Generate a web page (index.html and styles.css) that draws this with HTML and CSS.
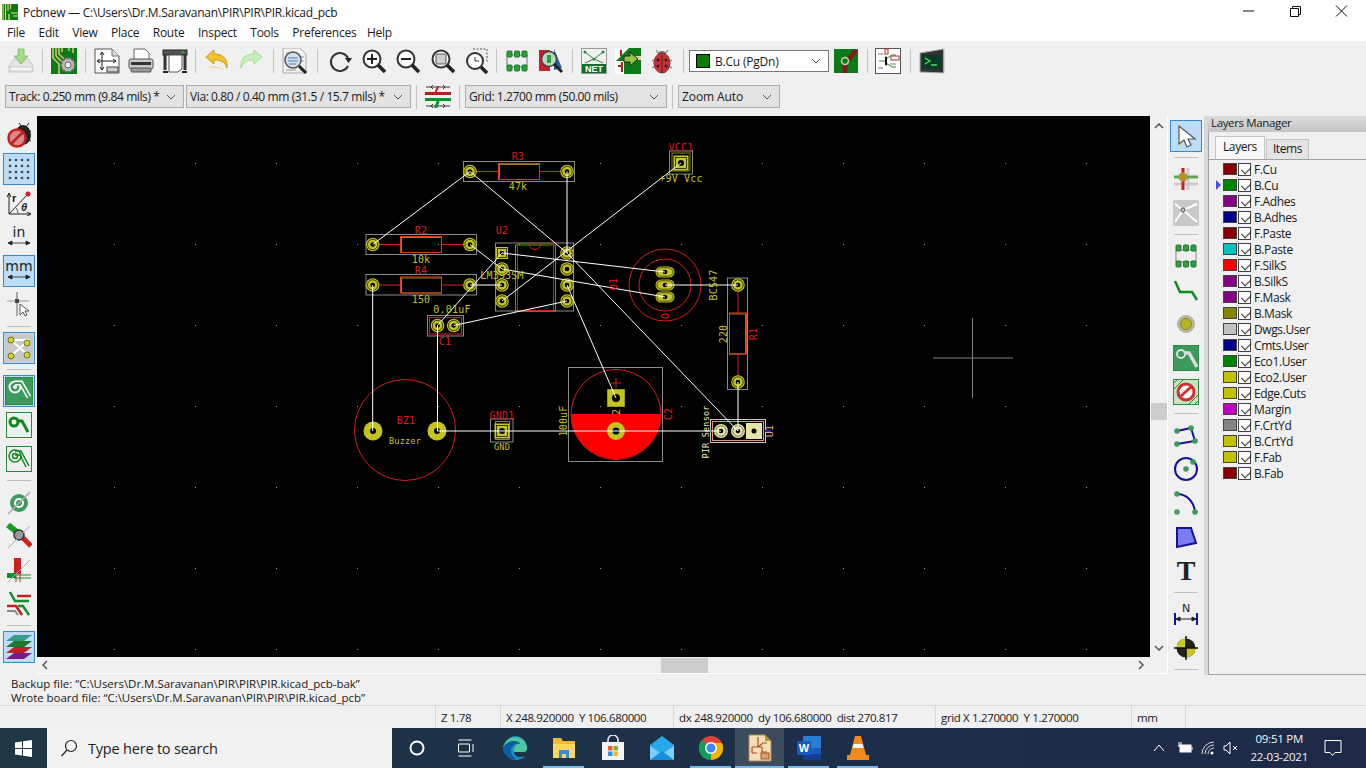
FILE: index.html
```html
<!DOCTYPE html>
<html lang="en">
<head>
<meta charset="utf-8">
<title>Pcbnew</title>
<link rel="stylesheet" href="styles.css">
</head>
<body>
<div class="app">
  <header class="titlebar">
    <svg class="appicon" width="16" height="16" viewBox="0 0 16 16"><rect width="16" height="16" fill="#0a7a0a"/><path d="M1 0v16M3.500 0v16M6 0v7M8.500 0v5" stroke="#d8c878" stroke-width="1.200"/><path d="M9 9h7M11 12h5M7 16v-6" stroke="#e8e0a0" stroke-width="1.200"/></svg>
    <span class="title">Pcbnew — C:\Users\Dr.M.Saravanan\PIR\PIR\PIR.kicad_pcb</span>
    <div class="winctl">
      <svg width="46" height="24" viewBox="0 0 46 24"><path d="M17 11h11" stroke="#111"/></svg>
      <svg width="46" height="24" viewBox="0 0 46 24"><path d="M18.500 8.500h8v8h-8zM20.500 8.500v-2h8v8h-2" fill="none" stroke="#111"/></svg>
      <svg width="46" height="24" viewBox="0 0 46 24"><path d="M18 5.500l11 11M29 5.500l-11 11" stroke="#111"/></svg>
    </div>
  </header>
  <nav class="menubar">
    <span>File</span><span>Edit</span><span>View</span><span>Place</span><span>Route</span><span>Inspect</span><span>Tools</span><span class="m8">Preferences</span><span>Help</span>
  </nav>

  <div class="toolbar tb1">
    <span class="tool"><svg width="26" height="26" viewBox="0 0 26 26"><path d="M1 18l5-7h14l5 7v6H1z" fill="#e4e4e4" stroke="#c8c8c8"/><rect x="2" y="19" width="22" height="4" fill="#f4f4f4" stroke="#d0d0d0"/><path d="M10 1h6v7h4l-7 8-7-8h4z" fill="#a8d98a" stroke="#8cc070"/></svg></span>
    <i class="sep"></i>
    <span class="tool"><svg width="26" height="26" viewBox="0 0 26 26"><rect width="26" height="26" fill="#0b7a17"/><path d="M2 0v10l6 6v10M5 0v8l6 6M8 0v6l6 6M11 0v4M18 0v3M22 0v5" stroke="#d8c97a" stroke-width="1.500" fill="none"/><circle cx="17" cy="17" r="7" fill="#b8b8b8" stroke="#666" stroke-dasharray="3 1.500" stroke-width="2"/><circle cx="17" cy="17" r="3" fill="#eee" stroke="#666"/></svg></span>
    <i class="sep"></i>
    <span class="tool"><svg width="26" height="26" viewBox="0 0 26 26"><path d="M1 1h17l7 7v17H1z" fill="#fff" stroke="#555"/><path d="M18 1v7h7" fill="#ddd" stroke="#777"/><path d="M8 4v18M3 13h19M8 4l-2 3M8 4l2 3M8 22l-2-3M8 22l2-3M3 13l3-2M3 13l3 2M22 13l-3-2M22 13l-3 2" stroke="#222" fill="none"/><rect x="13" y="19" width="11" height="5" fill="#ccc" stroke="#444"/></svg></span>
    <span class="tool"><svg width="26" height="26" viewBox="0 0 26 26"><path d="M6 1h11l4 4v8H6z" fill="#fff" stroke="#666"/><rect x="1" y="11" width="24" height="10" rx="2" fill="#c9c9c9" stroke="#555"/><rect x="3" y="14" width="20" height="3" fill="#333"/><rect x="3" y="20" width="20" height="4" rx="1" fill="#999" stroke="#555"/></svg></span>
    <span class="tool"><svg width="26" height="26" viewBox="0 0 26 26"><rect x="1" y="2" width="24" height="5" fill="#555" stroke="#222"/><circle cx="21" cy="4" r="1.300" fill="#2ea82e"/><path d="M7 7h13v14l-4 3H7z" fill="#fff" stroke="#555"/><path d="M3 7v15M23 7v15" stroke="#333" stroke-width="3"/><path d="M1 24h5M20 24h5" stroke="#222" stroke-width="2"/></svg></span>
    <i class="sep s7"></i>
    <span class="tool w35"><svg width="26" height="26" viewBox="0 0 26 26"><path d="M2 9l8-7v4c8 0 14 4 13 14-2-6-6-8-13-8v4z" fill="#f4c430" stroke="#c89a10"/><path d="M6 19c4 0 10 0 14 3" stroke="#eed27a" fill="none"/></svg></span>
    <span class="tool"><svg width="26" height="26" viewBox="0 0 26 26"><path d="M24 9l-8-7v4C8 6 2 10 3 20c2-6 6-8 13-8v4z" fill="#c8eeb8" stroke="#a8d898"/></svg></span>
    <i class="sep s10"></i>
    <span class="tool"><svg width="26" height="26" viewBox="0 0 26 26"><path d="M1 0h17l6 6v19H1z" fill="#f2f2f2" stroke="#aaa"/><path d="M4 5h10M4 22h10M18 22h4M19 9h3M19 13h3" stroke="#999"/><circle cx="11" cy="12" r="8" fill="#d4e0ee" stroke="#555" stroke-width="1.500"/><path d="M6 10h10M6 13h10M7 16h7" stroke="#5a7ea8"/><path d="M17 18l7 7" stroke="#222" stroke-width="3"/></svg></span>
    <i class="sep s10"></i>
    <span class="tool w35"><svg width="26" height="26" viewBox="0 0 26 26"><path d="M21 10a9 9 0 1 0 0 8" fill="none" stroke="#333" stroke-width="2"/><path d="M18 10h7l-3.500 5z" fill="#222"/></svg></span>
    <span class="tool"><svg width="26" height="26" viewBox="0 0 26 26"><circle cx="11" cy="11" r="8.500" fill="#fff" stroke="#333" stroke-width="2"/><path d="M6 11h10M11 6v10" stroke="#222" stroke-width="2"/><path d="M17 17l7 7" stroke="#222" stroke-width="3.500"/></svg></span>
    <span class="tool"><svg width="26" height="26" viewBox="0 0 26 26"><circle cx="11" cy="11" r="8.500" fill="#fff" stroke="#333" stroke-width="2"/><path d="M6 11h10" stroke="#222" stroke-width="2"/><path d="M17 17l7 7" stroke="#222" stroke-width="3.500"/></svg></span>
    <span class="tool w35"><svg width="26" height="26" viewBox="0 0 26 26"><circle cx="11" cy="11" r="8.500" fill="#fff" stroke="#333" stroke-width="2"/><rect x="6" y="6" width="10" height="10" rx="1.500" fill="#ccc" stroke="#555"/><path d="M17 17l7 7" stroke="#222" stroke-width="3.500"/></svg></span>
    <span class="tool"><svg width="26" height="26" viewBox="0 0 26 26"><circle cx="11" cy="13" r="8" fill="#fff" stroke="#333" stroke-width="2"/><path d="M9 1h14v14" fill="none" stroke="#555" stroke-dasharray="2 1.500"/><path d="M11 9v4h4" stroke="#333" fill="none"/><path d="M17 19l6 6" stroke="#222" stroke-width="3.500"/></svg></span>
    <i class="sep s5"></i>
    <span class="tool w35"><svg width="26" height="26" viewBox="0 0 26 26"><path d="M3 7h20v12H3z" fill="#eee" stroke="#777"/><g fill="#2e9e3e" stroke="#1a7a2a"><rect x="3" y="3" width="5" height="6" rx="1"/><rect x="10.500" y="3" width="5" height="6" rx="1"/><rect x="18" y="3" width="5" height="6" rx="1"/><rect x="3" y="17" width="5" height="6" rx="1"/><rect x="10.500" y="17" width="5" height="6" rx="1"/><rect x="18" y="17" width="5" height="6" rx="1"/></g></svg></span>
    <span class="tool"><svg width="26" height="26" viewBox="0 0 26 26"><rect x="1" y="2" width="11" height="21" fill="#c8202a"/><path d="M16 1l8 19-8 2z" fill="#2a5ca8"/><circle cx="11" cy="11" r="7.500" fill="#b8d8c0" stroke="#444" stroke-width="1.500"/><rect x="9" y="7" width="4" height="8" fill="#2e9e3e"/><path d="M16 16l8 8" stroke="#222" stroke-width="3"/></svg></span>
    <i class="sep"></i>
    <span class="tool"><svg width="26" height="26" viewBox="0 0 26 26"><rect x=".5" y=".5" width="25" height="25" fill="#f0f0f0" stroke="#999"/><path d="M4 4l9 7 9-7M4 15l9-4 9 4" stroke="#2e8a3e" fill="none"/><circle cx="4" cy="4" r="1.500" fill="#2e8a3e"/><circle cx="22" cy="4" r="1.500" fill="#2e8a3e"/><circle cx="13" cy="11" r="1.500" fill="#2e8a3e"/><rect x="1" y="16" width="24" height="9" fill="#0f6f2a"/><text class="neticon" x="13" y="24">NET</text></svg></span>
    <span class="tool"><svg width="26" height="26" viewBox="0 0 26 26"><rect width="26" height="26" fill="#0b7a17"/><path d="M0 0h14L0 14z" fill="#fff"/><path d="M0 26V13h9v13z" fill="#fff"/><path d="M6 2v6M3 18h4M7 14v10" stroke="#b02020" stroke-width="2"/><path d="M16 8h10v4H16z" fill="#e0d8a0"/><path d="M9 8h6V4l8 7-8 7v-4H9z" fill="#8ec63f" stroke="#222"/></svg></span>
    <span class="tool"><svg width="26" height="26" viewBox="0 0 26 26"><path d="M7 2l3 4M19 2l-3 4M3 12l4 2M23 12l-4 2M3 20l4-2M23 20l-4-2" stroke="#666"/><ellipse cx="13" cy="6" rx="4" ry="3" fill="#777"/><ellipse cx="13" cy="15" rx="8" ry="10" fill="#c8323a" stroke="#8a2a2a"/><path d="M13 7v18" stroke="#5a1a1a"/><circle cx="9" cy="12" r="1.500" fill="#411"/><circle cx="17" cy="12" r="1.500" fill="#411"/><circle cx="9" cy="18" r="1.500" fill="#411"/><circle cx="17" cy="18" r="1.500" fill="#411"/></svg></span>
    <i class="sep"></i>
    <div class="select layersel"><i class="lsw"></i><span>B.Cu (PgDn)</span><svg class="caret" width="10" height="6" viewBox="0 0 10 6"><path d="M1 1l4 4 4-4" fill="none" stroke="#555"/></svg></div>
    <span class="tool"><svg width="24" height="24" viewBox="0 0 24 24"><rect width="24" height="24" fill="#0b7a17"/><path d="M11 24v-9L22 1" fill="none" stroke="#7a1f1f" stroke-width="5"/><circle cx="11" cy="12" r="3.500" fill="#0b7a17" stroke="#d0d0a8" stroke-width="1.500"/></svg></span>
    <i class="sep s8"></i>
    <span class="tool"><svg width="26" height="26" viewBox="0 0 26 26"><rect x=".5" y=".5" width="25" height="25" fill="#fff" stroke="#555"/><path d="M11 8v10M11 13H4M11 11l6-4h4M11 15l6 4h4" stroke="#2a8a2a" fill="none"/><path d="M11 9v8" stroke="#111" stroke-width="2"/><rect x="16" y="8" width="8" height="4" fill="#fff" stroke="#b03030"/><rect x="10" y="1" width="3" height="5" fill="#fff" stroke="#b03030"/><path d="M3 6h5M3 20h5M15 16h6" stroke="#777"/></svg></span>
    <i class="sep s10"></i>
    <span class="tool"><svg width="26" height="26" viewBox="0 0 26 26"><path d="M1 5l24-4v24l-24-1z" fill="#333" stroke="#aaa"/><path d="M25 1v24" stroke="#ddd"/><rect x="3" y="7" width="19" height="14" fill="#0d3a28"/><path d="M6 10l5 3-5 3M12 17h6" stroke="#4ce04c" stroke-width="1.300" fill="none"/></svg></span>
  </div>

  <div class="toolbar tb2">
    <div class="select seltrack"><span>Track: 0.250 mm (9.84 mils) *</span><svg class="caret" width="10" height="6" viewBox="0 0 10 6"><path d="M1 1l4 4 4-4" fill="none" stroke="#555"/></svg></div>
    <div class="select selvia"><span>Via: 0.80 / 0.40 mm (31.5 / 15.7 mils) *</span><svg class="caret" width="10" height="6" viewBox="0 0 10 6"><path d="M1 1l4 4 4-4" fill="none" stroke="#555"/></svg></div>
    <i class="sep2"></i>
    <span class="tool2"><svg width="28" height="26" viewBox="0 0 28 26"><path d="M2 3h24M2 22h24" stroke="#333"/><path d="M9 1l-2 2 2 2M19 1l2 2-2 2M9 20l-2 2 2 2M19 20l2 2-2 2" stroke="#333" fill="none"/><path d="M14 2c0 3-2 3-2 6" stroke="#c02020" stroke-width="2" fill="none"/><rect x="1" y="8" width="26" height="3" fill="#b82020"/><rect x="1" y="14" width="26" height="3" fill="#12902a"/><path d="M14 17c0 3-2 3-2 7" stroke="#12902a" stroke-width="3" fill="none"/></svg></span>
    <i class="sep2"></i>
    <div class="select selgrid"><span>Grid: 1.2700 mm (50.00 mils)</span><svg class="caret" width="10" height="6" viewBox="0 0 10 6"><path d="M1 1l4 4 4-4" fill="none" stroke="#555"/></svg></div>
    <i class="sep2"></i>
    <div class="select selzoom"><span>Zoom Auto</span><svg class="caret" width="10" height="6" viewBox="0 0 10 6"><path d="M1 1l4 4 4-4" fill="none" stroke="#555"/></svg></div>
  </div>

  <main class="main">
    <aside class="vtools">
      <span class="vt"><svg width="28" height="28" viewBox="0 0 28 28"><ellipse cx="18" cy="14" rx="8" ry="10" fill="#222"/><path d="M14 2l3 4M24 2l-3 4M26 10l-4 2M26 20l-4-2" stroke="#222"/><circle cx="12" cy="17" r="8.500" fill="#d98a86" stroke="#c82020" stroke-width="2.500"/><path d="M6 23L18 11" stroke="#c82020" stroke-width="2.500"/></svg></span>
      <span class="vt on"><svg width="24" height="24" viewBox="0 0 24 24" fill="#444"><circle cx="3" cy="3" r="1.300"/><circle cx="9" cy="3" r="1.300"/><circle cx="15" cy="3" r="1.300"/><circle cx="21" cy="3" r="1.300"/><circle cx="3" cy="9" r="1.300"/><circle cx="9" cy="9" r="1.300"/><circle cx="15" cy="9" r="1.300"/><circle cx="21" cy="9" r="1.300"/><circle cx="3" cy="15" r="1.300"/><circle cx="9" cy="15" r="1.300"/><circle cx="15" cy="15" r="1.300"/><circle cx="21" cy="15" r="1.300"/><circle cx="3" cy="21" r="1.300"/><circle cx="9" cy="21" r="1.300"/><circle cx="15" cy="21" r="1.300"/><circle cx="21" cy="21" r="1.300"/></svg></span>
      <span class="vt"><svg width="26" height="26" viewBox="0 0 26 26"><path d="M3 24V3M3 24h22M3 3L1 7M3 3l2 4M25 24l-4-2M25 24l-4 2M3 24L21 5" stroke="#222" fill="none"/><circle cx="22" cy="4" r="2.500" fill="#d82020"/><path d="M12 24c0-3-1-5-2-6" fill="none" stroke="#555"/><text class="rt" x="6" y="12">r</text><text class="rt th" x="15" y="21">θ</text></svg></span>
      <span class="vt"><svg width="26" height="26" viewBox="0 0 26 26"><text class="unit" x="13" y="13">in</text><path d="M2 19h22M2 19l4-2v4zM24 19l-4-2v4z" fill="#222" stroke="#222" stroke-width=".8"/></svg></span>
      <span class="vt on"><svg width="26" height="26" viewBox="0 0 26 26"><text class="unit" x="13" y="13">mm</text><path d="M2 19h22M2 19l4-2v4zM24 19l-4-2v4z" fill="#222" stroke="#222" stroke-width=".8"/></svg></span>
      <span class="vt"><svg width="26" height="26" viewBox="0 0 26 26"><path d="M1 9h22" stroke="#999"/><path d="M11 0v24" stroke="#aaa" stroke-width="2"/><path d="M9 7h4v4H9z" fill="#444"/><path d="M14 12v11l3-3 2 4 2-1-2-4h4z" fill="#fff" stroke="#555"/></svg></span>
      <i class="hsep"></i>
      <span class="vt on"><svg width="28" height="28" viewBox="0 0 28 28"><rect width="28" height="28" fill="#c8c8c8"/><path d="M6 6l18 16M6 22l18-16M6 6h18" stroke="#fff" stroke-width="2"/><g fill="#d4d42a" stroke="#6a7a20"><circle cx="6" cy="6" r="3"/><circle cx="22" cy="9" r="3"/><circle cx="6" cy="22" r="3"/><circle cx="22" cy="21" r="3"/></g></svg></span>
      <i class="hsep"></i>
      <span class="vt on"><svg width="28" height="28" viewBox="0 0 28 28"><rect width="28" height="28" fill="#3b9a5a" stroke="#1a7a3a"/><circle cx="10" cy="10" r="5.500" fill="none" stroke="#fff" stroke-width="2"/><path d="M10 6h6l8 14" fill="none" stroke="#fff" stroke-width="5"/><path d="M10 6h6l8 14" fill="none" stroke="#3b9a5a" stroke-width="2"/><circle cx="10" cy="10" r="2" fill="#fff"/></svg></span>
      <span class="vt"><svg width="26" height="26" viewBox="0 0 26 26"><rect x=".5" y=".5" width="25" height="25" fill="none" stroke="#2a8a3a"/><circle cx="8" cy="10" r="4" fill="none" stroke="#0e8a1e" stroke-width="3"/><path d="M11 9h5l6 11" fill="none" stroke="#0e8a1e" stroke-width="3"/></svg></span>
      <span class="vt"><svg width="26" height="26" viewBox="0 0 26 26"><rect x=".5" y=".5" width="25" height="25" fill="none" stroke="#2a8a3a"/><circle cx="9" cy="10" r="6" fill="none" stroke="#0e8a1e" stroke-width="1.500"/><circle cx="9" cy="10" r="2.500" fill="none" stroke="#0e8a1e" stroke-width="1.500"/><path d="M9 5h6l8 15M9 9h5l6 12" fill="none" stroke="#0e8a1e" stroke-width="1.500"/></svg></span>
      <i class="hsep"></i>
      <span class="vt"><svg width="26" height="26" viewBox="0 0 26 26"><circle cx="13" cy="14" r="9" fill="#3c9a5a"/><circle cx="13" cy="14" r="5" fill="#fff"/><circle cx="13" cy="14" r="3" fill="#3c9a5a"/><path d="M2 25L24 3" stroke="#aaa" stroke-width="1.500"/></svg></span>
      <span class="vt"><svg width="26" height="26" viewBox="0 0 26 26"><path d="M2 2l10 8" stroke="#10a020" stroke-width="6"/><path d="M14 12l11 11" stroke="#d02020" stroke-width="5"/><circle cx="13" cy="12" r="5" fill="#999" stroke="#333" stroke-width="1.500"/><path d="M2 25L24 3" stroke="#aaa"/></svg></span>
      <span class="vt"><svg width="26" height="26" viewBox="0 0 26 26"><rect x="8" y="1" width="7" height="16" fill="#c82020"/><path d="M1 16h9v5H1z" fill="#10902a"/><path d="M10 17v8M14 17v8" stroke="#c82020"/><path d="M8 18h17M8 21h17" stroke="#10902a"/><path d="M2 25L24 3" stroke="#aaa"/></svg></span>
      <span class="vt"><svg width="26" height="26" viewBox="0 0 26 26"><path d="M4 1l5 9h14" fill="none" stroke="#10902a" stroke-width="2.500"/><path d="M11 5h14" stroke="#c82020" stroke-width="2.500"/><path d="M1 15h9l6 9" fill="none" stroke="#c82020" stroke-width="2.500"/><path d="M12 15h5l6 9" fill="none" stroke="#10902a" stroke-width="2.500"/><path d="M1 20h8l3 4" fill="none" stroke="#888" stroke-width="2"/></svg></span>
      <i class="hsep"></i>
      <span class="vt on"><svg width="28" height="28" viewBox="0 0 28 28"><path d="M1 8l8-6h18l-8 6z" fill="#3c9a8a"/><path d="M1 14l8-6h18l-8 6z" fill="#1a7a2a"/><path d="M1 20l8-6h18l-8 6z" fill="#c02020"/><path d="M1 26l8-6h18l-8 6z" fill="#7a1a8a"/></svg></span>
    </aside>

    <div class="center">
      <div class="canvasrow">
        <svg class="board" width="1113" height="541" viewBox="37 116 1113 541">
          <defs>
            <pattern id="griddots" x="33" y="1" width="81" height="81" patternUnits="userSpaceOnUse"><rect width="1" height="1" fill="#9a9a9a"/></pattern>
            <g id="pad"><circle r="6.800" fill="#c4c41e"/><circle r="5.200" fill="none" stroke="#000" stroke-width=".7"/><circle r="2.300" fill="#000"/></g>
            <g id="sq12"><rect x="-6" y="-6" width="12" height="12" fill="#c4c41e"/><rect x="-4.500" y="-4.500" width="9" height="9" fill="none" stroke="#000" stroke-width=".7"/><circle r="2.300" fill="#000"/></g>
            <g id="sqpad"><rect x="-7.500" y="-7.500" width="15" height="15" fill="#c4c41e"/><rect x="-5.500" y="-5.500" width="11" height="11" fill="none" stroke="#000" stroke-width=".7"/><circle r="3" fill="#000"/></g>
            <g id="ovpad"><rect x="-9.500" y="-5.500" width="19" height="11" rx="5.500" fill="#c4c41e"/><rect x="-8" y="-4.200" width="16" height="8.400" rx="4.200" fill="none" stroke="#000" stroke-width=".6"/><circle r="2.300" fill="#000"/></g>
          </defs>
          <rect x="37" y="116" width="1113" height="541" fill="#000"/>
          <rect x="37" y="116" width="1113" height="541" fill="url(#griddots)"/>
          <path d="M933 358h80M972.500 318v80" stroke="#7c7c7c" fill="none"/>

          <!-- courtyards -->
          <g fill="none" stroke="#8a8a8a">
            <rect x="463.500" y="161.500" width="111" height="20"/>
            <rect x="366" y="234.500" width="110.500" height="20"/>
            <rect x="366" y="274.500" width="110.500" height="20.500"/>
            <rect x="495.500" y="243" width="78" height="68"/>
            <rect x="427.500" y="315.500" width="36" height="20.500"/>
            <rect x="490.500" y="419" width="22.500" height="23"/>
            <rect x="669.500" y="151" width="23" height="23"/>
            <rect x="727.500" y="278" width="20" height="111.500"/>
            <rect x="568.500" y="367.500" width="94" height="94"/>
          </g>

          <!-- fab outlines -->
          <g fill="none" stroke="#a8a828" stroke-width=".8">
            <rect x="495.500" y="421.500" width="14" height="18"/>
            <rect x="672" y="153" width="18" height="18"/>
            <rect x="515.500" y="245" width="40" height="66"/>
            <rect x="499.500" y="164.500" width="40" height="15"/>
            <rect x="401.500" y="237.500" width="40" height="15"/>
            <rect x="401.500" y="278" width="40" height="15"/>
            <rect x="729.500" y="314" width="16" height="40"/>
          </g>

          <!-- silkscreen -->
          <g fill="none" stroke="#d81e1e">
            <path d="M476 171.500h22M539 171.500h22M379 244.500h22M441.500 244.500h22M379 285h22M441.500 285h22M738 291v22M738 354v22"/>
            <path d="M517.500 243.500h36v67h-36zM529 243.500a6 6 0 0 0 12 0"/>
            <rect x="429.500" y="317.500" width="32" height="16.500"/>
            <circle cx="405" cy="430" r="50.500"/>
            <circle cx="665" cy="285" r="36"/>
            <circle cx="665" cy="285" r="26"/>
            <circle cx="616" cy="414.500" r="45"/>
            <path d="M616 378v10M611 383h10"/>
          </g>
          <g fill="none" stroke="#e83a14">
            <rect x="498.500" y="163.500" width="41" height="16"/>
            <rect x="400.500" y="236.500" width="41" height="16"/>
            <rect x="400.500" y="277" width="41" height="16"/>
            <rect x="729.500" y="313" width="17" height="41"/>
          </g>
          <path d="M571 414h90a45 45 0 0 1-90 0z" fill="#ff0000"/>
          <rect x="710.500" y="419.500" width="55" height="23" fill="none" stroke="#c8c8c8"/>
          <rect x="712.500" y="421.500" width="51" height="19" fill="none" stroke="#e89078"/>

          <!-- pads -->
          <use href="#pad" x="470" y="171.500"/><use href="#pad" x="567" y="171.500"/>
          <use href="#pad" x="372.700" y="244.500"/><use href="#pad" x="470" y="244.500"/>
          <use href="#pad" x="372.700" y="285"/><use href="#pad" x="470" y="285"/>
          <use href="#sq12" x="502" y="253"/><use href="#pad" x="502" y="269"/><use href="#pad" x="502" y="285"/><use href="#pad" x="502" y="301"/>
          <use href="#pad" x="567" y="253"/><use href="#pad" x="567" y="269"/><use href="#pad" x="567" y="285"/><use href="#pad" x="567" y="301"/>
          <use href="#pad" x="437.500" y="325.500"/><use href="#pad" x="453.700" y="325.500"/>
          <use href="#ovpad" x="665" y="272"/><use href="#ovpad" x="665" y="285"/><use href="#ovpad" x="665" y="297"/>
          <use href="#pad" x="738" y="285"/><use href="#pad" x="738" y="382"/>
          <use href="#sqpad" x="502" y="431"/><use href="#sqpad" x="681" y="163"/>
          <g fill="#c4c41e"><circle cx="373" cy="431" r="9.500"/><circle cx="437" cy="431" r="9.500"/></g>
          <g fill="#000"><circle cx="373" cy="431" r="3"/><circle cx="437" cy="431" r="3"/></g>
          <rect x="607" y="389" width="18" height="18" fill="#c4c41e" stroke="#000" stroke-width=".4"/><circle cx="616" cy="398" r="4" fill="#000"/>
          <circle cx="616" cy="431" r="9" fill="#c4c41e"/><circle cx="616" cy="431" r="3.500" fill="#000"/>
          <g fill="#e8e4a8"><circle cx="721" cy="431" r="7"/><circle cx="738" cy="431" r="7"/><rect x="746" y="423" width="16" height="16"/></g>
          <circle cx="721" cy="431" r="5.200" fill="none" stroke="#333" stroke-width=".6"/><circle cx="738" cy="431" r="5.200" fill="none" stroke="#333" stroke-width=".6"/>
          <g fill="#000"><circle cx="721" cy="431" r="2.300"/><circle cx="738" cy="431" r="2.300"/><circle cx="754" cy="431" r="2.500"/></g>
          <path d="M705 431h6M765 431h6" stroke="#2030b0" stroke-width="2"/>

          <!-- ratsnest -->
          <g stroke="#fff" fill="none">
            <path d="M470 171.500L372.700 244.500M470 171.500L567 253M567 171.500V253M372.700 285V431M437.500 325.500V431M437.500 431H721M470 244.500L502 269M470 285H502M502 253L437.500 325.500M453.700 325.500L567 301M502 301L681 163M502 253L665 272M502 269L665 297M567 253L738 431M567 285L616 398M665 285H738M738 382V431"/>
          </g>

          <!-- text -->
          <g class="pcbtxt gold">
            <text x="518" y="190">47k</text>
            <text x="421" y="263">10k</text>
            <text x="421" y="303">150</text>
            <text x="502" y="279">LM393SM</text>
            <text x="452" y="313">0.01uF</text>
            <text class="small" x="405" y="444">Buzzer</text>
            <text class="small" x="502" y="450">GND</text>
            <text x="681" y="182">+9V Vcc</text>
            <text transform="translate(717 285) rotate(-90)">BC547</text>
            <text transform="translate(727 334) rotate(-90)">220</text>
            <text transform="translate(567 421) rotate(-90)">100uF</text>
            <text transform="translate(620 412) rotate(-90)">2</text>
          </g>
          <g class="pcbtxt red">
            <text x="518" y="160">R3</text>
            <text x="421" y="234">R2</text>
            <text x="421" y="274">R4</text>
            <text x="502" y="234">U2</text>
            <text x="445" y="345">C1</text>
            <text x="406" y="424">BZ1</text>
            <text x="502" y="419">GND1</text>
            <text x="681" y="151">VCC1</text>
            <text transform="translate(617 284) rotate(-90)">Q1</text>
            <text transform="translate(757 334) rotate(-90)">R1</text>
            <text transform="translate(672 414) rotate(-90)">C2</text>
            <text transform="translate(669 316) rotate(-90)">O</text>
          </g>
          <text class="pcbtxt pink" transform="translate(773 431) rotate(-90)">U1</text>
          <text class="pcbtxt pale small" transform="translate(709 432) rotate(-90)">PIR Sensor</text>
        </svg>
        <div class="vscroll">
          <svg width="10" height="6" viewBox="0 0 10 6"><path d="M1 5l4-4 4 4" fill="none" stroke="#555" stroke-width="1.500"/></svg>
          <i class="vspace1"></i><i class="vthumb"></i><i class="vspace2"></i>
          <svg width="10" height="6" viewBox="0 0 10 6"><path d="M1 1l4 4 4-4" fill="none" stroke="#555" stroke-width="1.500"/></svg>
        </div>
      </div>
      <div class="hscroll">
        <svg width="6" height="10" viewBox="0 0 6 10"><path d="M5 1L1 5l4 4" fill="none" stroke="#555" stroke-width="1.500"/></svg>
        <i class="hspace1"></i><i class="hthumb"></i><i class="hspace2"></i>
        <svg width="6" height="10" viewBox="0 0 6 10"><path d="M1 1l4 4-4 4" fill="none" stroke="#555" stroke-width="1.500"/></svg>
      </div>
    </div>

    <aside class="rtools">
      <span class="vt on"><svg width="24" height="24" viewBox="0 0 24 24"><path d="M5 2v18l5-4 3 7 4-2-3-6h7z" fill="#fff" stroke="#555" stroke-width="1.200"/></svg></span>
      <i class="hsep"></i>
      <span class="vt"><svg width="26" height="26" viewBox="0 0 26 26"><path d="M15 2v22" stroke="#ccc" stroke-width="3"/><path d="M1 18h24" stroke="#ccc" stroke-width="3"/><path d="M1 11h24" stroke="#5aa85a" stroke-width="3"/><path d="M10 2v22" stroke="#c02020" stroke-width="3"/><circle cx="10" cy="11" r="4.500" fill="#b89030"/></svg></span>
      <span class="vt"><svg width="26" height="26" viewBox="0 0 26 26"><rect width="26" height="26" rx="2" fill="#c8c8c8"/><path d="M10 10L2 22M10 10l-8-6M10 10l14-6M10 10l14 12" stroke="#fff" stroke-width="2"/><circle cx="10" cy="10" r="2" fill="#c8c8c8" stroke="#555"/></svg></span>
      <i class="hsep"></i>
      <span class="vt"><svg width="26" height="26" viewBox="0 0 26 26"><path d="M3 7h20v12H3z" fill="#eee" stroke="#888"/><g fill="#2e9e3e" stroke="#1a7a2a"><rect x="3" y="2" width="5" height="6" rx="1"/><rect x="10.500" y="2" width="5" height="6" rx="1"/><rect x="18" y="2" width="5" height="6" rx="1"/><rect x="3" y="18" width="5" height="6" rx="1"/><rect x="10.500" y="18" width="5" height="6" rx="1"/><rect x="18" y="18" width="5" height="6" rx="1"/></g></svg></span>
      <span class="vt"><svg width="26" height="26" viewBox="0 0 26 26"><path d="M2 4l5 11h12l5 8" fill="none" stroke="#0e8a1e" stroke-width="2.500"/></svg></span>
      <span class="vt"><svg width="26" height="26" viewBox="0 0 26 26"><circle cx="13" cy="13" r="9" fill="#b4b4a0"/><circle cx="13" cy="13" r="5.500" fill="#b4b41e" stroke="#8a8a30"/></svg></span>
      <span class="vt"><svg width="26" height="26" viewBox="0 0 26 26"><rect width="26" height="26" fill="#3b9a5a" stroke="#1a7a3a"/><circle cx="8" cy="9" r="4" fill="none" stroke="#ddd" stroke-width="2"/><path d="M11 8h5l8 14" fill="none" stroke="#ddd" stroke-width="3.500"/></svg></span>
      <span class="vt"><svg width="26" height="26" viewBox="0 0 26 26"><rect x=".5" y=".5" width="25" height="25" fill="#c8e4c0" stroke="#2a8a3a"/><path d="M1 4L4 1M1 10l9-9M16 25l9-9M22 25l3-3" stroke="#2a8a3a"/><circle cx="13" cy="13" r="8" fill="#fff" stroke="#d03030" stroke-width="3"/><path d="M8 17l10-9" stroke="#d03030" stroke-width="3"/></svg></span>
      <i class="hsep"></i>
      <span class="vt"><svg width="26" height="26" viewBox="0 0 26 26"><path d="M4 9l14-3 4 13-18 3" fill="none" stroke="#12129a" stroke-width="2"/><g fill="#3c9a5a"><circle cx="4" cy="9" r="2.800"/><circle cx="18" cy="6" r="2.800"/><circle cx="22" cy="19" r="2.800"/><circle cx="4" cy="22" r="2.800"/></g></svg></span>
      <span class="vt"><svg width="26" height="26" viewBox="0 0 26 26"><circle cx="13" cy="13" r="11" fill="none" stroke="#12129a" stroke-width="2"/><circle cx="13" cy="13" r="2.800" fill="#3c9a5a"/><circle cx="20" cy="6" r="2.800" fill="#3c9a5a"/></svg></span>
      <span class="vt"><svg width="26" height="26" viewBox="0 0 26 26"><path d="M4 4c10 0 17 8 18 18" fill="none" stroke="#12129a" stroke-width="2"/><g fill="#3c9a5a"><circle cx="4" cy="4" r="2.800"/><circle cx="4" cy="22" r="2.800"/><circle cx="22" cy="22" r="2.800"/></g></svg></span>
      <span class="vt"><svg width="26" height="26" viewBox="0 0 26 26"><path d="M4 4h14l5 15L4 23z" fill="#7c7cf4" stroke="#12129a" stroke-width="2"/></svg></span>
      <span class="vt bigt">T</span>
      <i class="hsep"></i>
      <span class="vt"><svg width="26" height="26" viewBox="0 0 26 26"><text class="dimn" x="13" y="11">N</text><path d="M2 12v12M24 12v12" stroke="#12129a" stroke-width="2"/><path d="M2 18h22M3 18l4-2v4zM23 18l-4-2v4z" fill="#222" stroke="#222"/></svg></span>
      <span class="vt"><svg width="26" height="26" viewBox="0 0 26 26"><circle cx="13" cy="13" r="9.500" fill="#222"/><path d="M13 13V3.500A9.500 9.500 0 0 0 3.500 13zM13 13v9.500A9.500 9.500 0 0 0 22.500 13z" fill="#c8c81e"/><path d="M1 13h24M13 1v24" stroke="#111" stroke-width="1.500"/></svg></span>
      <i class="hsep"></i>
    </aside>
    <div class="strip"></div>

    <aside class="layers">
      <div class="lmhead">Layers Manager</div>
      <div class="tabs"><span class="tab act">Layers</span><span class="tab">Items</span></div>
      <div class="lmbody">
        <div class="lrow"><i class="sw c1"></i><i class="cb"></i><span>F.Cu</span></div>
        <div class="lrow cur"><i class="sw c2"></i><i class="cb"></i><span>B.Cu</span></div>
        <div class="lrow"><i class="sw c3"></i><i class="cb"></i><span>F.Adhes</span></div>
        <div class="lrow"><i class="sw c4"></i><i class="cb"></i><span>B.Adhes</span></div>
        <div class="lrow"><i class="sw c1"></i><i class="cb"></i><span>F.Paste</span></div>
        <div class="lrow"><i class="sw c5"></i><i class="cb"></i><span>B.Paste</span></div>
        <div class="lrow"><i class="sw c6"></i><i class="cb"></i><span>F.SilkS</span></div>
        <div class="lrow"><i class="sw c3"></i><i class="cb"></i><span>B.SilkS</span></div>
        <div class="lrow"><i class="sw c3"></i><i class="cb"></i><span>F.Mask</span></div>
        <div class="lrow"><i class="sw c7"></i><i class="cb"></i><span>B.Mask</span></div>
        <div class="lrow"><i class="sw c8"></i><i class="cb"></i><span>Dwgs.User</span></div>
        <div class="lrow"><i class="sw c4"></i><i class="cb"></i><span>Cmts.User</span></div>
        <div class="lrow"><i class="sw c2"></i><i class="cb"></i><span>Eco1.User</span></div>
        <div class="lrow"><i class="sw c9"></i><i class="cb"></i><span>Eco2.User</span></div>
        <div class="lrow"><i class="sw c9"></i><i class="cb"></i><span>Edge.Cuts</span></div>
        <div class="lrow"><i class="sw c10"></i><i class="cb"></i><span>Margin</span></div>
        <div class="lrow"><i class="sw c11"></i><i class="cb"></i><span>F.CrtYd</span></div>
        <div class="lrow"><i class="sw c9"></i><i class="cb"></i><span>B.CrtYd</span></div>
        <div class="lrow"><i class="sw c9"></i><i class="cb"></i><span>F.Fab</span></div>
        <div class="lrow"><i class="sw c1"></i><i class="cb"></i><span>B.Fab</span></div>
      </div>
    </aside>
  </main>

  <section class="messages">
    <div>Backup file: “C:\Users\Dr.M.Saravanan\PIR\PIR\PIR.kicad_pcb-bak”</div>
    <div>Wrote board file: “C:\Users\Dr.M.Saravanan\PIR\PIR\PIR.kicad_pcb”</div>
  </section>
  <footer class="status">
    <span class="f0"></span>
    <span class="f1">Z 1.78</span>
    <span class="f2">X 248.920000  Y 106.680000</span>
    <span class="f3">dx 248.920000  dy 106.680000  dist 270.817</span>
    <span class="f4">grid X 1.270000  Y 1.270000</span>
    <span class="f5">mm</span>
    <span class="f6"></span>
  </footer>

  <div class="taskbar">
    <span class="start"><svg width="17" height="17" viewBox="0 0 17 17" fill="#fff"><path d="M0 2.500l7-1v6.500H0zM8 1.300L17 0v8H8zM0 9h7v6.500l-7-1zM8 9h9v8l-9-1.300z"/></svg></span>
    <div class="search"><svg width="18" height="18" viewBox="0 0 18 18"><circle cx="11" cy="7" r="5.500" fill="none" stroke="#222" stroke-width="1.200"/><path d="M7 11l-5.500 6" stroke="#222" stroke-width="1.200"/></svg><span>Type here to search</span></div>
    <span class="tk"><svg width="20" height="20" viewBox="0 0 20 20"><circle cx="10" cy="10" r="6.500" fill="none" stroke="#fff" stroke-width="2"/></svg></span>
    <span class="tk"><svg width="20" height="20" viewBox="0 0 20 20"><path d="M2.500 2h13M2.500 18h13M2.500 6h11v8h-11zM17 6v8" fill="none" stroke="#fff"/></svg></span>
    <span class="tk"><svg width="26" height="26" viewBox="0 0 26 26"><path d="M13 1a12 12 0 0 1 12 12c0 2-1 4-4 4h-9c0 3 3 5 7 5 2 0 3-1 4-1a12 12 0 1 1-10-20z" fill="#1a8fc8"/><path d="M1 13C2 6 8 2 13 2c6 0 11 4 12 11 0 3-2 4-4 4h-9c-1-6 4-8 4-8-6-2-13 0-15 4z" fill="#4cc89a"/><path d="M1 13c1-4 6-7 11-7 4 0 6 2 6 3-5-1-9 2-9 7 0 4 3 6 5 8C7 24 1 20 1 13z" fill="#0c5ea0"/></svg></span>
    <span class="tk run"><svg width="24" height="22" viewBox="0 0 24 22"><path d="M1 1h8l2 3h12v17H1z" fill="#f2b632"/><path d="M1 7h22v14H1z" fill="#fcd462"/><rect x="7" y="13" width="10" height="8" fill="#2f8fd8"/><rect x="10" y="17" width="4" height="4" fill="#fcd462"/></svg></span>
    <span class="tk"><svg width="24" height="26" viewBox="0 0 24 26"><path d="M7 8V5a5 5 0 0 1 10 0v3" fill="none" stroke="#eee" stroke-width="1.500"/><rect x="1" y="7" width="22" height="18" fill="#f4f4f4"/><rect x="7" y="11" width="4.500" height="4.500" fill="#e8602a"/><rect x="12.500" y="11" width="4.500" height="4.500" fill="#7cb82a"/><rect x="7" y="16.500" width="4.500" height="4.500" fill="#2a9ae8"/><rect x="12.500" y="16.500" width="4.500" height="4.500" fill="#f4b82a"/></svg></span>
    <span class="tk"><svg width="26" height="26" viewBox="0 0 26 26"><path d="M1 10L13 1l12 9v15H1z" fill="#28a8ea"/><path d="M1 11l12 8 12-8v14H1z" fill="#7cd0f4"/><path d="M1 25l12-9 12 9z" fill="#1490df"/></svg></span>
    <span class="tk run"><svg width="26" height="26" viewBox="0 0 26 26"><circle cx="13" cy="13" r="12" fill="#db4437"/><path d="M13 13L2 18a12 12 0 0 0 11 7z" fill="#0f9d58"/><path d="M13 13l-11 5A12 12 0 0 1 4 5z" fill="#0f9d58"/><path d="M13 13v12a12 12 0 0 0 11-17H13z" fill="#f4b400"/><circle cx="13" cy="13" r="6" fill="#fff"/><circle cx="13" cy="13" r="4.500" fill="#4285f4"/></svg></span>
    <span class="tk run act"><svg width="24" height="28" viewBox="0 0 24 28"><path d="M1 1h16l6 6v20H1z" fill="#f4e0b8" stroke="#a88a50"/><path d="M17 1v6h6z" fill="#b8942a"/><path d="M10 3v10M4 13h10M4 13v6M14 13v5h5M10 13l5-4h4M4 19h5" stroke="#b84820" fill="none" stroke-width="1.200"/><rect x="13" y="19" width="8" height="6" fill="#d8a070" stroke="#a05020"/></svg></span>
    <span class="tk run"><svg width="26" height="24" viewBox="0 0 26 24"><rect x="7" y="0" width="18" height="24" rx="1" fill="#2b7cd3"/><rect x="7" y="12" width="18" height="6" fill="#185abd"/><rect x="7" y="18" width="18" height="6" fill="#103f91"/><rect x="1" y="5" width="14" height="14" rx="1" fill="#185abd"/><text class="wordw" x="8" y="16">W</text></svg></span>
    <span class="tk run"><svg width="24" height="26" viewBox="0 0 24 26"><path d="M9 1h6l5 19H4z" fill="#f08a1c"/><path d="M7.500 9h9l1 4h-11z" fill="#f4f4f4"/><path d="M1 20h22v5H1z" fill="#f08a1c"/></svg></span>
    <div class="tray">
      <svg class="t1" width="12" height="8" viewBox="0 0 12 8"><path d="M1 7l5-6 5 6" fill="none" stroke="#fff"/></svg>
      <svg class="t2" width="16" height="14" viewBox="0 0 16 14"><rect x="3" y="4" width="11" height="7" fill="#fff" stroke="#fff"/><path d="M4 1v4M2 1v4M1 5h4" stroke="#fff"/><path d="M15 6v3" stroke="#fff"/></svg>
      <svg class="t3" width="16" height="14" viewBox="0 0 16 14"><path d="M1 13A12 12 0 0 1 13 1M4 13a9 9 0 0 1 9-9M7 13a6 6 0 0 1 6-6" fill="none" stroke="#ddd"/><circle cx="11" cy="12" r="1.500" fill="#fff"/></svg>
      <svg class="t4" width="16" height="14" viewBox="0 0 16 14"><path d="M1 5h2l4-4v12L3 9H1z" fill="none" stroke="#fff"/><path d="M10 5l4 4M14 5l-4 4" stroke="#fff"/></svg>
      <div class="clock"><span>09:51 PM</span><span>22-03-2021</span></div>
      <svg class="t5" width="18" height="18" viewBox="0 0 18 18"><path d="M1 1.500h16v12h-6l-2.500 3-2.500-3H1z" fill="none" stroke="#fff"/></svg>
    </div>
  </div>
</div>
</body>
</html>
```
FILE: styles.css
```css
* { box-sizing: border-box; }
html, body { margin: 0; padding: 0; }
body {
  width: 1366px;
  height: 768px;
  overflow: hidden;
  font-family: "Open Sans", "Noto Sans", sans-serif;
  font-size: 12px;
  letter-spacing: -0.25px;
  color: #1a1a1a;
  background: #f0f0f0;
}
.app { display: flex; flex-direction: column; width: 1366px; height: 768px; }
i { display: block; font-style: normal; }

.titlebar { height: 24px; background: #fff; display: flex; align-items: center; padding-left: 2px; flex: none; }
.appicon { margin-right: 5px; flex: none; }
.title { font-size: 12px; white-space: nowrap; }
.winctl { margin-left: auto; display: flex; margin-right: 2px; }

.menubar { height: 17px; background: #fff; display: flex; align-items: center; padding-left: 7px; flex: none; }
.menubar span { line-height: 17px; margin-right: 13.500px; white-space: nowrap; }
.menubar .m8 { margin-right: 10.500px; }

.toolbar { display: flex; align-items: center; background: #f0f0f0; flex: none; }
.tb1 { height: 38px; padding: 2px 0 0 4px; }
.tb2 { height: 37px; padding: 0 0 2px 5px; }
.tool { width: 34px; height: 26px; display: flex; align-items: center; justify-content: center; flex: none; }
.w35 { width: 35px; }
.sep { width: 9px; height: 26px; flex: none; }
.sep::after { content: ""; display: block; width: 1px; height: 24px; margin: 1px auto; background: #c4c4c4; }
.s7 { width: 7px; }
.s10 { width: 10px; }
.s5 { width: 5px; }
.s8 { width: 8px; }
.sep2 { width: 1px; height: 24px; background: #c4c4c4; flex: none; margin: 0 5px; }
.tool2 { width: 32px; height: 26px; display: flex; align-items: center; justify-content: center; flex: none; }

.select {
  height: 23px;
  display: flex;
  align-items: center;
  justify-content: space-between;
  background: #e3e3e3;
  border: 1px solid #adadad;
  padding: 0 7px 0 3px;
  flex: none;
  white-space: nowrap;
  font-size: 12px;
  letter-spacing: -0.4px;
}
.layersel { width: 140px; height: 22px; background: #fff; border-color: #7a7a7a; justify-content: flex-start; padding-left: 6px; margin-left: 1px; letter-spacing: -0.2px; }
.layersel .caret { margin-left: auto; }
.lsw { width: 14px; height: 14px; background: #0a7a0a; border: 1px solid #000; margin-right: 5px; }
.seltrack { width: 179px; margin-right: 2px; }
.selvia { width: 225px; }
.selgrid { width: 202px; }
.selzoom { width: 102px; letter-spacing: -0.1px; }

.main { height: 559px; display: flex; flex: none; }
.vtools { width: 37px; flex: none; padding-top: 2px; display: flex; flex-direction: column; align-items: center; background: #f0f0f0; }
.vt { width: 32px; height: 32px; margin: 1px 0; display: flex; align-items: center; justify-content: center; flex: none; border: 1px solid transparent; }
.vt.on { background: #bcdcf7; border-color: #3c88cc; }
.hsep { width: 24px; height: 1px; background: #c0c0c0; margin: 4px 0; flex: none; }
.center { width: 1131px; display: flex; flex-direction: column; flex: none; border-right: 1px solid #fff; }
.canvasrow { display: flex; height: 541px; flex: none; }
.board { display: block; flex: none; }
.vscroll { width: 17px; display: flex; flex-direction: column; align-items: center; padding: 7px 0 6px; background: #f0f0f0; }
.vspace1 { height: 274px; flex: none; }
.vthumb { width: 16px; height: 17px; background: #cdcdcd; flex: none; }
.vspace2 { flex: 1; }
.hscroll { height: 17px; display: flex; align-items: center; background: #f0f0f0; padding: 0 23px 0 5px; border-bottom: 1px solid #fff; flex: none; }
.hspace1 { width: 613px; flex: none; }
.hthumb { width: 47px; height: 15px; background: #cdcdcd; flex: none; }
.hspace2 { flex: 1; }
.rtools { width: 36px; flex: none; padding-top: 3px; display: flex; flex-direction: column; align-items: center; background: #f0f0f0; }
.strip { width: 4px; background: #d8d8d8; flex: none; }

.layers { width: 158px; flex: none; display: flex; flex-direction: column; background: #f0f0f0; }
.lmhead { height: 16px; line-height: 13px; padding-left: 3px; font-size: 11.500px; letter-spacing: -0.35px; background: linear-gradient(#dcdcdc, #c4c4c4); white-space: nowrap; }
.tabs { height: 27px; display: flex; align-items: flex-end; padding-left: 6px; border-left: 1px solid #a0a0a0; background: #f0f0f0; flex: none; }
.tab { height: 20px; line-height: 18px; padding: 0 6px; background: #e4e4e4; border: 1px solid #c4c4c4; border-bottom: 0; margin-right: 1px; font-size: 12px; letter-spacing: -0.4px; }
.tab.act { background: #f8f8f8; height: 23px; line-height: 20px; padding: 0 7px; }
.lmbody { flex: 1; border-top: 1px solid #a0a0a0; border-left: 1px solid #a0a0a0; border-bottom: 1px solid #a0a0a0; padding-top: 1px; }
.lrow { height: 16px; display: flex; align-items: center; padding-left: 14px; position: relative; white-space: nowrap; }
.lrow span { margin-left: 3px; font-size: 12px; letter-spacing: -0.4px; }
.lrow.cur::before { content: ""; position: absolute; left: 7px; top: 3px; border-left: 5px solid #4a4aee; border-top: 5px solid transparent; border-bottom: 5px solid transparent; }
.sw { width: 14px; height: 12px; border: 1px solid #444; flex: none; }
.cb { width: 13px; height: 13px; margin-left: 1px; border: 1px solid #444; background: #fff; flex: none; position: relative; }
.cb::after { content: ""; position: absolute; left: 2px; top: 0; width: 8px; height: 5px; border-left: 1px solid #333; border-bottom: 1px solid #333; transform: rotate(-45deg) translate(-1px, 2px); }
.c1 { background: #840000; }
.c2 { background: #008400; }
.c3 { background: #840084; }
.c4 { background: #000084; }
.c5 { background: #00c2c2; }
.c6 { background: #ff0000; }
.c7 { background: #848400; }
.c8 { background: #c2c2c2; }
.c9 { background: #c2c200; }
.c10 { background: #c200c2; }
.c11 { background: #848484; }

.messages { height: 30px; background: #f0f0f0; padding: 2px 0 0 11px; font-size: 11.500px; letter-spacing: -0.03px; line-height: 14px; flex: none; }
.status { height: 23px; display: flex; background: #f0f0f0; border-top: 1px solid #d8d8d8; font-size: 11.500px; letter-spacing: -0.35px; line-height: 23px; flex: none; white-space: pre; }
.status span { padding-left: 5px; border-right: 1px solid #d8d8d8; height: 22px; flex: none; }
.f0 { width: 436px; }
.f1 { width: 65px; }
.f2 { width: 173px; }
.f3 { width: 262px; }
.f4 { width: 196px; }
.f5 { width: 54px; }
.status .f6 { flex: 1; border-right: 0; }

.taskbar { height: 40px; display: flex; align-items: center; background: linear-gradient(90deg, #1f3645, #1d3048 50%, #1c2a48); flex: none; }
.start { width: 47px; height: 40px; display: flex; align-items: center; justify-content: center; flex: none; }
.search { width: 345px; height: 40px; background: #f2f2f2; display: flex; align-items: center; padding-left: 13px; font-size: 14.500px; color: #222; letter-spacing: -0.2px; flex: none; }
.search span { margin-left: 10px; }
.tk { width: 49px; height: 40px; display: flex; align-items: center; justify-content: center; flex: none; position: relative; }
.tk.run::after { content: ""; position: absolute; left: 4px; right: 4px; bottom: 0; height: 2px; background: #76b9ed; }
.tk.act { background: #3c4c5c; }
.tk.act::after { left: 0; right: 0; }
.tray { margin-left: auto; display: flex; align-items: center; height: 40px; color: #fff; padding-right: 24px; }
.t1 { margin-right: 12px; }
.t2 { margin-right: 8px; }
.t3 { margin-right: 6px; }
.t4 { margin-right: 11px; }
.clock { display: flex; flex-direction: column; align-items: center; font-size: 11.500px; line-height: 18px; margin-right: 16px; color: #f4f4f4; }

.pcbtxt { font-family: "DejaVu Sans Mono", monospace; font-size: 10px; letter-spacing: 0.2px; text-anchor: middle; }
.pcbtxt .small, .pcbtxt.small { font-size: 8.500px; }
.gold { fill: #c2c22c; }
.red { fill: #e01818; }
.pink { fill: #eca0a0; }
.pale { fill: #e8e8b8; }
.neticon { font-family: "Liberation Sans", sans-serif; font-size: 9px; font-weight: 700; fill: #fff; text-anchor: middle; letter-spacing: 0; }
.rt { font-family: "Liberation Sans", sans-serif; font-size: 11px; font-weight: 700; fill: #222; letter-spacing: 0; }
.rt.th { font-style: italic; }
.unit { font-family: "DejaVu Sans", sans-serif; font-size: 14px; fill: #222; text-anchor: middle; letter-spacing: 0; }
.vt.bigt { font-family: "Liberation Serif", serif; font-size: 28px; line-height: 30px; font-weight: 700; color: #222; letter-spacing: 0; }
.dimn { font-family: "DejaVu Sans", sans-serif; font-size: 11px; fill: #222; text-anchor: middle; letter-spacing: 0; }
.wordw { font-family: "Liberation Sans", sans-serif; font-size: 11px; font-weight: 700; fill: #fff; text-anchor: middle; letter-spacing: 0; }
```
